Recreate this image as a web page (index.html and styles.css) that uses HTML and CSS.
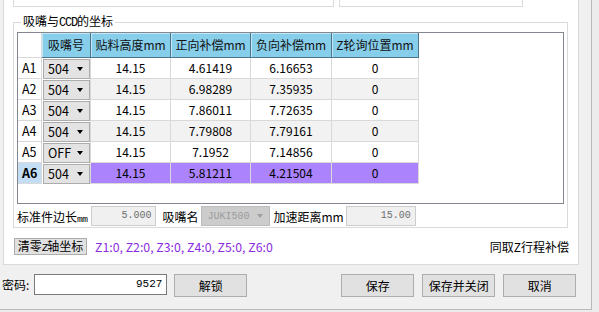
FILE: index.html
```html
<!DOCTYPE html>
<html lang="zh-CN">
<head>
    <meta charset="UTF-8">
    <title>吸嘴与CCD的坐标</title>
    <link rel="stylesheet" href="styles.css">
</head>
<body>
    <div class="window">
        <div class="panel">
            <div class="stubs">
                <div class="stub stub-a"></div>
                <div class="stub stub-b"></div>
            </div>
            <fieldset class="group">
                <legend>吸嘴与<span class="narrow">CCD</span>的坐标</legend>
                <div class="grid">
                    <div class="cell corner"></div>
                    <div class="cell hd">吸嘴号</div>
                    <div class="cell hd">贴料高度mm</div>
                    <div class="cell hd">正向补偿mm</div>
                    <div class="cell hd">负向补偿mm</div>
                    <div class="cell hd">Z轮询位置mm</div>

                    <div class="cell rh">A1</div>
                    <div class="cell cb-cell"><div class="combo"><span>504</span><span class="arrow"></span></div></div>
                    <div class="cell">14.15</div>
                    <div class="cell">4.61419</div>
                    <div class="cell">6.16653</div>
                    <div class="cell">0</div>

                    <div class="cell rh">A2</div>
                    <div class="cell cb-cell"><div class="combo"><span>504</span><span class="arrow"></span></div></div>
                    <div class="cell alt">14.15</div>
                    <div class="cell alt">6.98289</div>
                    <div class="cell alt">7.35935</div>
                    <div class="cell alt">0</div>

                    <div class="cell rh">A3</div>
                    <div class="cell cb-cell"><div class="combo"><span>504</span><span class="arrow"></span></div></div>
                    <div class="cell">14.15</div>
                    <div class="cell">7.86011</div>
                    <div class="cell">7.72635</div>
                    <div class="cell">0</div>

                    <div class="cell rh">A4</div>
                    <div class="cell cb-cell"><div class="combo"><span>504</span><span class="arrow"></span></div></div>
                    <div class="cell alt">14.15</div>
                    <div class="cell alt">7.79808</div>
                    <div class="cell alt">7.79161</div>
                    <div class="cell alt">0</div>

                    <div class="cell rh">A5</div>
                    <div class="cell cb-cell"><div class="combo"><span>OFF</span><span class="arrow"></span></div></div>
                    <div class="cell">14.15</div>
                    <div class="cell">7.1952</div>
                    <div class="cell">7.14856</div>
                    <div class="cell">0</div>

                    <div class="cell rh sel">A6</div>
                    <div class="cell cb-cell"><div class="combo"><span>504</span><span class="arrow"></span></div></div>
                    <div class="cell picked">14.15</div>
                    <div class="cell picked">5.81211</div>
                    <div class="cell picked">4.21504</div>
                    <div class="cell picked">0</div>
                </div>
                <div class="params">
                    <span class="lbl">标准件边长<span class="small">mm</span></span>
                    <div class="tb tb-side">5.000</div>
                    <span class="lbl lbl-name">吸嘴名</span>
                    <div class="combo-off"><span>JUKI500</span><span class="arrow arrow-off"></span></div>
                    <span class="lbl lbl-acc">加速距离mm</span>
                    <div class="tb tb-acc">15.00</div>
                </div>
            </fieldset>
            <div class="zero-row">
                <button class="btn btn-zero">清零<span class="narrow">Z</span>轴坐标</button>
                <span class="zvals">Z1:0, Z2:0, Z3:0, Z4:0, Z5:0, Z6:0</span>
                <span class="sync">同取Z行程补偿</span>
            </div>
        </div>
        <div class="footer">
            <span class="pw-label">密码:</span>
            <div class="pw">9527</div>
            <button class="btn btn-unlock">解锁</button>
            <button class="btn btn-save">保存</button>
            <button class="btn btn-next">保存并关闭</button>
            <button class="btn btn-next">取消</button>
        </div>
    </div>
</body>
</html>
```

FILE: styles.css
```css
* {
    box-sizing: border-box;
}
body {
    margin: 0;
    background-color: #ececec;
    font-family: "Noto Sans CJK SC", "Noto Sans", sans-serif;
    font-size: 12px;
    color: #000;
}
.window {
    width: 592px;
    height: 310px;
    background-color: #f0f0f0;
    border-right: 1px solid #b9b9b9;
    border-bottom: 1px solid #b9b9b9;
    overflow: hidden;
}
.panel {
    margin-left: 3px;
    width: 576px;
    height: 265px;
    background-color: #fff;
    border: 1px solid #dadada;
    border-top: none;
}
.stubs {
    display: flex;
    gap: 5px;
    height: 7px;
    padding-left: 9px;
}
.stub {
    border: 1px solid #dadada;
    border-top: none;
}
.stub-a {
    width: 321px;
}
.stub-b {
    width: 184px;
}
.group {
    margin: 6px 0 0 9px;
    width: 555px;
    min-width: 0;
    padding: 1px 3px 1px 3px;
    border: 1px solid #dadada;
}
.group legend {
    margin-left: 4px;
    padding: 0 2px;
    line-height: 16px;
    font-size: 12px;
}
.narrow {
    font-family: "Liberation Mono", monospace;
    font-size: 12px;
    letter-spacing: -1.2px;
}

/* data grid */
.grid {
    height: 172px;
    border: 1px solid #828790;
    background-color: #fff;
    display: grid;
    grid-template-columns: 24px 49px 80px 80px 81px 87px;
    grid-template-rows: 25px repeat(6, 21px);
    align-content: start;
}
.cell {
    display: flex;
    align-items: center;
    justify-content: center;
    border-right: 1px solid #d9d9d9;
    border-bottom: 1px solid #d9d9d9;
    white-space: nowrap;
    line-height: 1;
}
.corner {
    background-color: #fff;
}
.hd {
    background-color: #87ceeb;
    border-right-color: #4d7587;
    border-bottom-color: #4d7587;
    box-shadow: inset 1px 1px 0 #c2e8f7;
    color: #111;
}
.rh {
    justify-content: flex-start;
    padding-left: 4px;
    background-color: #fff;
    font-size: 12.5px;
}
.rh.sel {
    background-color: #c2ddf4;
    font-weight: bold;
}
.alt {
    background-color: #f2f2f2;
}
.picked {
    background-color: #ab84fd;
}
.cb-cell {
    padding: 1px 0 0 1px;
    border-bottom: none;
    background-color: #fff;
}
.combo {
    width: 100%;
    height: 100%;
    display: flex;
    align-items: center;
    justify-content: space-between;
    padding: 0 6px 0 4px;
    background-color: #e3e3e3;
    border: 1px solid #acacac;
    font-size: 12.5px;
}
.arrow {
    width: 0;
    height: 0;
    border-left: 3.5px solid transparent;
    border-right: 3.5px solid transparent;
    border-top: 4px solid #000;
}

/* settings under the grid */
.params {
    display: flex;
    align-items: center;
    height: 20px;
    margin-top: 2px;
    font-size: 12px;
}
.small {
    font-family: "Liberation Mono", monospace;
    font-size: 9.5px;
    letter-spacing: -0.5px;
}
.tb {
    width: 65px;
    height: 20px;
    padding-right: 4px;
    background-color: #f0f0f0;
    border: 1px solid #cccccc;
    color: #6d6d6d;
    font-family: "Liberation Mono", monospace;
    font-size: 10px;
    line-height: 18px;
    text-align: right;
}
.tb-side {
    margin-left: 4px;
}
.tb-acc {
    width: 70px;
    margin-left: 2px;
}
.lbl-name {
    margin-left: 6px;
}
.combo-off {
    width: 69px;
    height: 20px;
    margin-left: 3px;
    display: flex;
    align-items: center;
    justify-content: space-between;
    padding: 0 6px 0 5px;
    background-color: #cccccc;
    border: 1px solid #bcbcbc;
    color: #9c9c9c;
    font-family: "Liberation Mono", monospace;
    font-size: 10px;
}
.arrow-off {
    border-top-color: #9e9e9e;
}
.lbl-acc {
    margin-left: 3px;
}

/* zero button row */
.zero-row {
    display: flex;
    align-items: center;
    height: 17px;
    margin: 10px 9px 0 10px;
}
.btn {
    background-color: #e1e1e1;
    border: 1px solid #adadad;
    font-family: "Noto Sans CJK SC", "Noto Sans", sans-serif;
    font-size: 12px;
    color: #000;
    padding: 0;
    line-height: 1;
}
.btn-zero {
    width: 73px;
    height: 17px;
}
.btn-zero .narrow {
    font-size: 11px;
    letter-spacing: -1px;
}
.zvals {
    margin-left: 8px;
    color: #8a2be2;
    font-size: 12.3px;
}
.sync {
    margin-left: auto;
}

/* bottom bar */
.footer {
    display: flex;
    align-items: flex-start;
    padding: 9px 0 0 2px;
}
.pw-label {
    line-height: 22px;
}
.pw {
    width: 133px;
    height: 21px;
    margin-left: 5px;
    padding-right: 4px;
    background-color: #fff;
    border: 1px solid #7a7a7a;
    font-family: "Liberation Mono", monospace;
    font-size: 11px;
    line-height: 19px;
    text-align: right;
}
.footer .btn {
    width: 73px;
    height: 23px;
}
.btn-unlock {
    margin-left: 7px;
}
.btn-save {
    margin-left: 94px;
}
.btn-next {
    margin-left: 8px;
}
```
